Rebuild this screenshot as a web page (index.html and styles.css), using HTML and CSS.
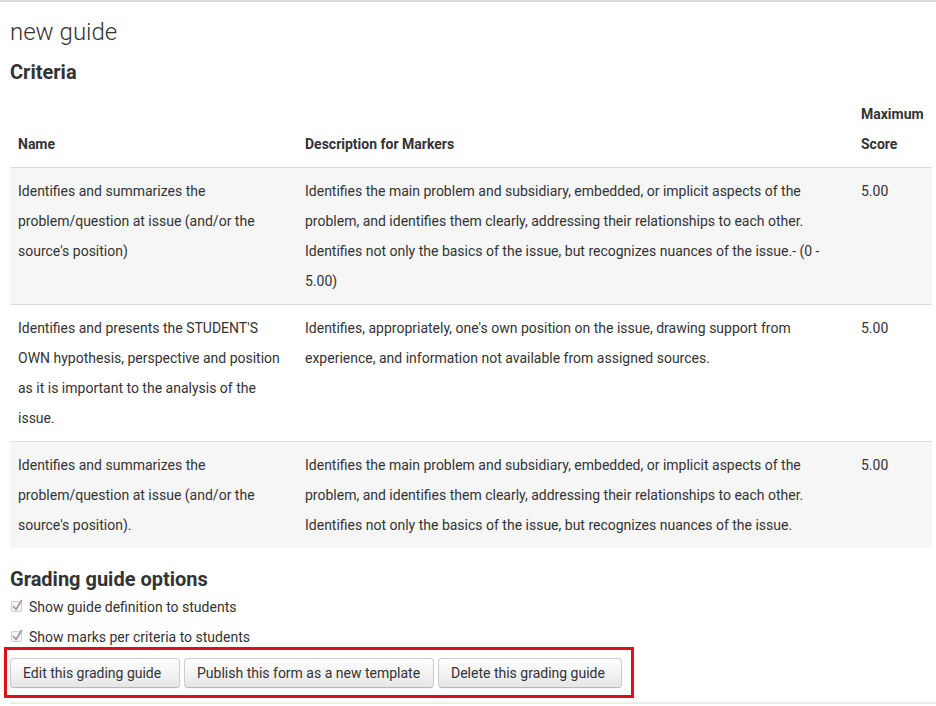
FILE: index.html
```html
<!DOCTYPE html>
<html lang="en">
<head>
<meta charset="utf-8">
<title>new guide</title>
<link rel="stylesheet" href="styles.css">
</head>
<body>
<div class="topline"></div>
<div class="page">
  <h2 class="title">new guide</h2>
  <h3 class="section">Criteria</h3>
  <table class="criteria">
    <colgroup>
      <col class="c-name">
      <col class="c-desc">
      <col class="c-score">
    </colgroup>
    <thead>
      <tr>
        <th>Name</th>
        <th>Description for Markers</th>
        <th>Maximum Score</th>
      </tr>
    </thead>
    <tbody>
      <tr class="odd">
        <td>Identifies and summarizes the problem/question at issue (and/or the source's position)</td>
        <td>Identifies the main problem and subsidiary, embedded, or implicit aspects of the problem, and identifies them clearly, addressing their relationships to each other. Identifies not only the basics of the issue, but recognizes nuances of the issue.- (0 - 5.00)</td>
        <td>5.00</td>
      </tr>
      <tr>
        <td>Identifies and presents the STUDENT'S OWN hypothesis, perspective and position as it is important to the analysis of the issue.</td>
        <td>Identifies, appropriately, one's own position on the issue, drawing support from experience, and information not available from assigned sources.</td>
        <td>5.00</td>
      </tr>
      <tr class="odd">
        <td>Identifies and summarizes the problem/question at issue (and/or the source's position).</td>
        <td>Identifies the main problem and subsidiary, embedded, or implicit aspects of the problem, and identifies them clearly, addressing their relationships to each other. Identifies not only the basics of the issue, but recognizes nuances of the issue.</td>
        <td>5.00</td>
      </tr>
    </tbody>
  </table>
  <h3 class="section options-title">Grading guide options</h3>
  <div class="option">
    <svg class="check" width="14" height="14" viewBox="0 0 14 14"><rect x="1.5" y="2.5" width="10" height="10" rx="1.5" fill="#f6f6f6" stroke="#cfcfcf"/><path d="M3.5 7.5 L6 10.5 L11.5 1.5" fill="none" stroke="#a0a0a0" stroke-width="1.8" stroke-linecap="round" stroke-linejoin="round"/></svg>
    <span>Show guide definition to students</span>
  </div>
  <div class="option">
    <svg class="check" width="14" height="14" viewBox="0 0 14 14"><rect x="1.5" y="2.5" width="10" height="10" rx="1.5" fill="#f6f6f6" stroke="#cfcfcf"/><path d="M3.5 7.5 L6 10.5 L11.5 1.5" fill="none" stroke="#a0a0a0" stroke-width="1.8" stroke-linecap="round" stroke-linejoin="round"/></svg>
    <span>Show marks per criteria to students</span>
  </div>
  <div class="actions">
    <button class="btn btn-edit" type="button">Edit this grading guide</button>
    <button class="btn btn-publish" type="button">Publish this form as a new template</button>
    <button class="btn btn-delete" type="button">Delete this grading guide</button>
  </div>
  <div class="bottomline"></div>
</div>
</body>
</html>
```
FILE: styles.css
```css
html, body {
  margin: 0;
  padding: 0;
  background: #ffffff;
}
body {
  font-family: Roboto, "Noto Sans", "Liberation Sans", sans-serif;
  font-size: 14px;
  color: #333333;
}
.topline {
  height: 2px;
  background: #dcdcdc;
}
.page {
  padding-left: 10px;
}
.title {
  margin: 12px 0 0 0;
  font-size: 24px;
  font-weight: 300;
  line-height: 36px;
  color: #333333;
}
.section {
  margin: 10px 0 0 0;
  font-size: 20px;
  font-weight: 700;
  line-height: 24px;
  color: #333333;
}
.criteria {
  margin-top: 7px;
  width: 922px;
  table-layout: fixed;
  border-collapse: collapse;
  border-spacing: 0;
}
.c-name { width: 287px; }
.c-desc { width: 556px; }
.c-score { width: 79px; }
.criteria th,
.criteria td {
  padding: 8px;
  line-height: 30px;
  text-align: left;
  vertical-align: top;
}
.criteria th {
  vertical-align: bottom;
  font-weight: 700;
}
.criteria td {
  border-top: 1px solid #dddddd;
}
.criteria tr.odd td {
  background: #f6f6f6;
}
.options-title {
  margin-top: 18px;
  line-height: 26px;
}
.option {
  display: flex;
  align-items: center;
  gap: 5px;
  height: 30px;
  line-height: 30px;
}
.check {
  display: block;
  margin-top: -2px;
}
.actions {
  display: flex;
  gap: 4px;
  width: fit-content;
  margin: -5px 0 0 -6px;
  padding: 8px 9px 7px 3px;
  border: 3px solid #e30e1b;
}
.btn {
  box-sizing: border-box;
  font-family: Roboto, "Noto Sans", "Liberation Sans", sans-serif;
  font-size: 14px;
  line-height: 20px;
  color: #333333;
  padding: 4px 12px;
  text-align: left;
  background: linear-gradient(#ffffff, #e6e6e6);
  border: 1px solid #cccccc;
  border-bottom-color: #b8b8b8;
  border-radius: 4px;
  box-shadow: inset 0 1px 0 rgba(255,255,255,0.2), 0 1px 2px rgba(0,0,0,0.05);
  cursor: pointer;
}
.btn-edit { width: 170px; }
.btn-publish { width: 250px; }
.btn-delete { width: 184px; }
.bottomline {
  margin-top: 4px;
  height: 2px;
  background: #ececec;
}
```
